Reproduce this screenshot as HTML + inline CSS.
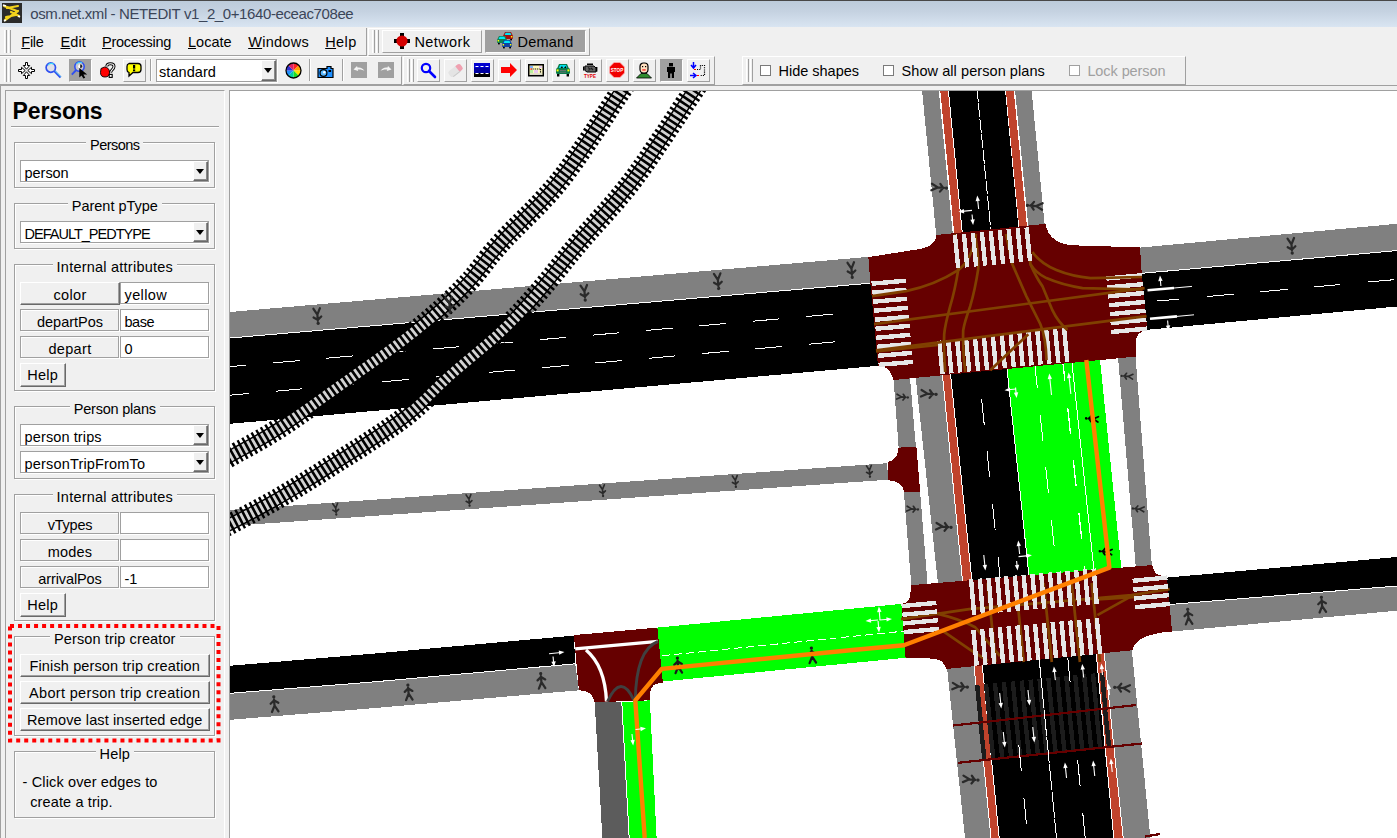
<!DOCTYPE html><html><head><meta charset="utf-8"><title>osm.net.xml - NETEDIT</title><style>
*{box-sizing:border-box}
html,body{margin:0;padding:0}
body{width:1397px;height:838px;overflow:hidden;background:#f0f0f0;font-family:"Liberation Sans",sans-serif;font-size:14px;color:#000;position:relative}
.abs{position:absolute}
.t{position:absolute;white-space:nowrap;line-height:16px;height:16px}
.titlebar{position:absolute;left:0;top:0;width:1397px;height:27px;background:linear-gradient(#bccbdb 0%,#c5d2e1 40%,#d9e5f2 100%);border-top:1px solid #484848}
.grip{position:absolute;width:7px}
.grip i{position:absolute;top:0;bottom:0;width:3px;border-left:1px solid #fff;border-right:1px solid #a0a0a0}
.raised{border:1px solid;border-color:#fff #a0a0a0 #a0a0a0 #fff}
.btn{position:absolute;background:#f0f0f0;border:1px solid;border-color:#fff #696969 #696969 #fff;box-shadow:inset -1px -1px 0 #a0a0a0}
.tb{position:absolute;width:23px;height:23px;border:1px solid;border-color:#fff #a0a0a0 #a0a0a0 #fff}
.tb.flat{border-color:transparent}
.tb.down{background:#a0a0a0;border-color:#a0a0a0 #fff #fff #a0a0a0}
.sunk{position:absolute;background:#fff;border:1px solid #a0a0a0;box-shadow:1px 1px 0 #fff}
.field{position:absolute;background:#fff;border:1px solid #a0a0a0;box-shadow:1px 1px 0 #fff}
.lbl{position:absolute;background:#f0f0f0;border:1px solid #a0a0a0;box-shadow:inset 1px 1px 0 #fff,1px 1px 0 #fff;text-align:center}
.arrow{position:absolute;background:#f0f0f0;border:1px solid;border-color:#fff #696969 #696969 #fff;box-shadow:inset -1px -1px 0 #8a8a8a}
.arrow:after{content:"";position:absolute;left:2px;top:7px;border:4.5px solid transparent;border-top:5px solid #000;border-bottom:0}
.grp{position:absolute;border:1px solid #a0a0a0;box-shadow:inset 1px 1px 0 #fff, 1px 1px 0 #fff}
.grp>span{position:absolute;top:-10px;left:50%;transform:translateX(-50%);background:#f0f0f0;padding:0 4px;white-space:nowrap;line-height:18px}
.sep{position:absolute;width:2px;border-left:1px solid #a0a0a0;border-right:1px solid #fff}
.hline{position:absolute;height:2px;border-top:1px solid #a0a0a0;border-bottom:1px solid #fff}
.cb{position:absolute;width:11px;height:11px;background:#fff;border:1px solid #7a7a7a}
u{text-decoration:underline;text-underline-offset:1px}
</style></head><body>
<div class="titlebar"></div>
<svg class="abs" style="left:2px;top:3px" width="20" height="20" viewBox="0 0 20 20"><rect width="20" height="20" fill="#2b2b2b"/><path d="M2 3 L15 8 M5 5 L16 3 M16 8 L3 17 M9 9 L17 13 M4 14 L14 12" stroke="#f2d21c" stroke-width="2.2" fill="none" stroke-linecap="round"/><path d="M1 2 l3 1 M16 13 l2 1 M2 18 l2 -1" stroke="#fff" stroke-width="1.6"/></svg>
<div class="t" style="left:30.30px;top:5.55px;font-size:15px;letter-spacing:-0.394px;color:#3b4558;">osm.net.xml - NETEDIT v1_2_0+1640-eceac708ee</div>
<div class="grip" style="left:4px;top:30px;height:23px"><i style="left:0"></i><i style="left:4px"></i></div>
<div class="t" style="left:21.30px;top:34.00px;font-size:14.5px;letter-spacing:-0.292px;height:19px;"><u>F</u>ile</div>
<div class="t" style="left:60.50px;top:34.00px;font-size:14.5px;letter-spacing:0.128px;height:19px;"><u>E</u>dit</div>
<div class="t" style="left:102.00px;top:34.00px;font-size:14.5px;letter-spacing:-0.274px;height:19px;"><u>P</u>rocessing</div>
<div class="t" style="left:188.00px;top:34.00px;font-size:14.5px;letter-spacing:0.009px;height:19px;"><u>L</u>ocate</div>
<div class="t" style="left:248.20px;top:34.00px;font-size:14.5px;letter-spacing:0.282px;height:19px;"><u>W</u>indows</div>
<div class="t" style="left:325.20px;top:34.00px;font-size:14.5px;letter-spacing:0.419px;height:19px;"><u>H</u>elp</div>
<div class="abs" style="left:0;top:55px;width:367px;height:1px;background:#a0a0a0"></div>
<div class="abs" style="left:366px;top:28px;width:1px;height:28px;background:#a0a0a0"></div>
<div class="abs" style="left:368px;top:28px;width:222px;height:28px;border:1px solid;border-color:#fff #a0a0a0 #a0a0a0 #fff"></div>
<div class="grip" style="left:372px;top:30px;height:23px"><i style="left:0"></i><i style="left:4px"></i></div>
<div class="abs raised" style="left:382px;top:30px;width:100px;height:23px"></div>
<svg class="abs" style="left:394px;top:33px" width="16" height="16" viewBox="0 0 16 16"><rect x="6" y="0" width="4" height="16" fill="#000"/><rect x="0" y="6" width="16" height="4" fill="#000"/><circle cx="8" cy="8" r="5.6" fill="#d40000"/></svg>
<div class="t" style="left:414.40px;top:34.00px;font-size:14.5px;letter-spacing:0.415px;">Network</div>
<div class="abs" style="left:485px;top:30px;width:101px;height:23px;background:#a0a0a0;border:1px solid;border-color:#a0a0a0 #fff #fff #a0a0a0"></div>
<svg class="abs" style="left:497px;top:32px" width="17" height="17" viewBox="0 0 17 17"><g transform="translate(6 0)"><path d="M2 0 H8 L9.5 3 H.5 Z" fill="#a01010"/><path d="M2.6 .8 H7.4 L8.4 3 H1.6 Z" fill="#00e8f8"/><rect x="0" y="3" width="10" height="4" rx="1" fill="#a01010"/><rect x=".6" y="4" width="1.5" height="1.5" fill="#ff0"/><rect x="7.9" y="4" width="1.5" height="1.5" fill="#ff0"/><rect x="1" y="7" width="1.8" height="1.4" fill="#000"/><rect x="7.2" y="7" width="1.8" height="1.4" fill="#000"/></g><g transform="translate(0 4)"><path d="M2 0 H8 L9.5 3 H.5 Z" fill="#108050"/><path d="M2.6 .8 H7.4 L8.4 3 H1.6 Z" fill="#00e8f8"/><rect x="0" y="3" width="10" height="4" rx="1" fill="#108050"/><rect x=".6" y="4" width="1.5" height="1.5" fill="#ff0"/><rect x="7.9" y="4" width="1.5" height="1.5" fill="#ff0"/><rect x="1" y="7" width="1.8" height="1.4" fill="#000"/><rect x="7.2" y="7" width="1.8" height="1.4" fill="#000"/></g><g transform="translate(5 8)"><path d="M2 0 H8 L9.5 3 H.5 Z" fill="#1040a0"/><path d="M2.6 .8 H7.4 L8.4 3 H1.6 Z" fill="#00e8f8"/><rect x="0" y="3" width="10" height="4" rx="1" fill="#1040a0"/><rect x=".6" y="4" width="1.5" height="1.5" fill="#ff0"/><rect x="7.9" y="4" width="1.5" height="1.5" fill="#ff0"/><rect x="1" y="7" width="1.8" height="1.4" fill="#000"/><rect x="7.2" y="7" width="1.8" height="1.4" fill="#000"/></g></svg>
<div class="t" style="left:517.50px;top:34.00px;font-size:14.5px;letter-spacing:0.215px;">Demand</div>
<div class="abs" style="left:0;top:56px;width:402px;height:29px;border-top:1px solid #fff;border-bottom:1px solid #a0a0a0;border-right:1px solid #a0a0a0"></div>
<div class="grip" style="left:4px;top:59px;height:23px"><i style="left:0"></i><i style="left:4px"></i></div>
<svg class="abs" style="left:18px;top:62px" width="17" height="17" viewBox="0 0 17 17"><g fill="#fff" stroke="#000" stroke-width="1" stroke-linejoin="miter"><g transform="rotate(0 8.5 8.5)"><path d="M7.5 .5 H9.5 V3.5 H11.7 L8.5 7.2 L5.3 3.5 H7.5 Z"/></g><g transform="rotate(90 8.5 8.5)"><path d="M7.5 .5 H9.5 V3.5 H11.7 L8.5 7.2 L5.3 3.5 H7.5 Z"/></g><g transform="rotate(180 8.5 8.5)"><path d="M7.5 .5 H9.5 V3.5 H11.7 L8.5 7.2 L5.3 3.5 H7.5 Z"/></g><g transform="rotate(270 8.5 8.5)"><path d="M7.5 .5 H9.5 V3.5 H11.7 L8.5 7.2 L5.3 3.5 H7.5 Z"/></g></g></svg>
<svg class="abs" style="left:45px;top:62px" width="17" height="17" viewBox="0 0 17 17"><circle cx="5.8" cy="5.6" r="4.7" fill="#e0e0e8" stroke="#3050f0" stroke-width="1.7"/><path d="M3 3.2 A4.7 4.7 0 0 1 8.8 2.2" stroke="#40d8f8" stroke-width="1.2" fill="none"/><path d="M9.3 9 L15.6 15.6" stroke="#3050f0" stroke-width="2.2"/><path d="M9.9 8.6 L16 14.8" stroke="#58d0f0" stroke-width="1"/></svg>
<div class="tb down" style="left:69px;top:59px;width:23px;height:23px"></div>
<svg class="abs" style="left:71px;top:60px" width="18" height="19" viewBox="0 0 18 19"><circle cx="8.5" cy="6.6" r="4.7" fill="#c8c8d0" stroke="#3050f0" stroke-width="1.6"/><path d="M5.5 4 A4.7 4.7 0 0 1 11 2.8" stroke="#40d8f8" stroke-width="1.1" fill="none"/><path d="M5.2 10 L.8 14.6" stroke="#3050f0" stroke-width="1.9"/><circle cx="9.2" cy="6.2" r="2" fill="#fff"/><path d="M9.2 4.2 a2 2 0 0 1 0 4 z" fill="#222"/><path d="M8.3 8 L8.3 17.6 L10.6 15.4 L12.4 18.6 L14.2 17.8 L12.4 14.6 L16.2 14.6 Z" fill="#000"/></svg>
<svg class="abs" style="left:100px;top:62px" width="16" height="17" viewBox="0 0 16 17"><path d="M1 6.5 L4.5 5 Q9.5 5.5 9.5 10.5 Q9.5 15 5 15 Q.5 15 .5 10.5 Z" fill="#f00" stroke="#000" stroke-width=".9"/><path d="M6.8 4.6 C6.8 .8 14 .8 14 4.6 C14 7.6 10.6 7.6 10.6 10.8" fill="none" stroke="#000" stroke-width="3"/><path d="M6.8 4.6 C6.8 .8 14 .8 14 4.6 C14 7.6 10.6 7.6 10.6 10.8" fill="none" stroke="#fff" stroke-width="1.1"/><rect x="9.2" y="12.4" width="3" height="3" fill="#fff" stroke="#000" stroke-width="1.1"/></svg>
<div class="tb" style="left:123px;top:59px;width:23px;height:23px"></div>
<svg class="abs" style="left:126px;top:62px" width="16" height="16" viewBox="0 0 16 16"><path d="M3 1.5 H12 A3 3 0 0 1 15 4.5 V7.5 A3 3 0 0 1 12 10.5 H7 L3 14 V10.5 A3 3 0 0 1 1 7.5 V4.5 A3 3 0 0 1 3 1.5 Z" fill="#ff0" stroke="#000" stroke-width="1.3"/><rect x="7" y="3" width="2.2" height="3.6" fill="#000"/><rect x="7" y="7.4" width="2.2" height="1.8" fill="#000"/></svg>
<div class="sep" style="left:150px;top:59px;height:22px"></div>
<div class="sunk" style="left:156px;top:59px;width:121px;height:23px"><div class="arrow" style="right:0px;top:0px;width:15px;height:21px"></div></div>
<div class="t" style="left:159.00px;top:63.50px;font-size:14.5px;letter-spacing:0.071px;">standard</div>
<svg class="abs" style="left:285px;top:62px" width="17" height="17" viewBox="0 0 17 17"><path d="M8.5 8.5 L8.50 1.00 A7.5 7.5 0 0 1 13.80 3.20 Z" fill="#ff2020"/><path d="M8.5 8.5 L13.80 3.20 A7.5 7.5 0 0 1 16.00 8.50 Z" fill="#ffa000"/><path d="M8.5 8.5 L16.00 8.50 A7.5 7.5 0 0 1 13.80 13.80 Z" fill="#ffe000"/><path d="M8.5 8.5 L13.80 13.80 A7.5 7.5 0 0 1 8.50 16.00 Z" fill="#20e020"/><path d="M8.5 8.5 L8.50 16.00 A7.5 7.5 0 0 1 3.20 13.80 Z" fill="#00d0a0"/><path d="M8.5 8.5 L3.20 13.80 A7.5 7.5 0 0 1 1.00 8.50 Z" fill="#2090ff"/><path d="M8.5 8.5 L1.00 8.50 A7.5 7.5 0 0 1 3.20 3.20 Z" fill="#3030d0"/><path d="M8.5 8.5 L3.20 3.20 A7.5 7.5 0 0 1 8.50 1.00 Z" fill="#e02060"/><circle cx="8.5" cy="8.5" r="7.5" fill="none" stroke="#000" stroke-width="1.3"/></svg>
<div class="sep" style="left:309px;top:59px;height:22px"></div>
<svg class="abs" style="left:317px;top:64px" width="17" height="15" viewBox="0 0 17 15"><path d="M1 4.5 H10 V2.5 H14 V4.5 H16 V13.5 H1 Z" fill="#1e90ff" stroke="#000" stroke-width="1.2"/><circle cx="6.5" cy="9" r="3.4" fill="#58b8ff" stroke="#000" stroke-width="1.2"/><circle cx="7.3" cy="8.2" r="1.2" fill="#fff"/><rect x="11.5" y="6" width="2.6" height="2" fill="#000"/></svg>
<div class="sep" style="left:342px;top:59px;height:22px"></div>
<svg class="abs" style="left:351px;top:62px" width="16" height="16" viewBox="0 0 16 16"><rect width="16" height="16" fill="#a0a0a0"/><path d="M2.5 7.5 L6 4 L6.5 5.6 C9.5 5 12 6.5 13.5 9 C11.5 7.6 9 7.2 6.8 7.6 L7.2 9 Z" fill="#f4f4f4"/></svg>
<svg class="abs" style="left:378px;top:62px" width="16" height="16" viewBox="0 0 16 16"><rect width="16" height="16" fill="#a0a0a0"/><path d="M2.5 7.5 L6 4 L6.5 5.6 C9.5 5 12 6.5 13.5 9 C11.5 7.6 9 7.2 6.8 7.6 L7.2 9 Z" fill="#f4f4f4" transform="translate(16 0) scale(-1 1)"/></svg>
<div class="abs" style="left:403px;top:56px;width:312px;height:29px;border:1px solid;border-color:#fff #a0a0a0 #a0a0a0 #fff"></div>
<div class="grip" style="left:407px;top:59px;height:23px"><i style="left:0"></i><i style="left:4px"></i></div>
<div class="tb" style="left:417px;top:59px;width:23px;height:23px"></div>
<svg class="abs" style="left:420px;top:62px" width="17" height="17" viewBox="0 0 17 17"><circle cx="6" cy="6" r="4.2" fill="none" stroke="#0000ff" stroke-width="2.2"/><path d="M9 9 L15 15" stroke="#0000ff" stroke-width="2.6" stroke-linecap="round"/></svg>
<div class="tb" style="left:444px;top:59px;width:23px;height:23px"></div>
<svg class="abs" style="left:447px;top:62px" width="17" height="17" viewBox="0 0 17 17"><g transform="rotate(-38 8.5 8.5)"><rect x="1" y="5" width="15" height="7" rx="2.2" fill="#e4e4e4"/><path d="M11 5 H13.8 A2.2 2.2 0 0 1 16 7.2 V9.8 A2.2 2.2 0 0 1 13.8 12 H11 Z" fill="#f0a0b0"/><path d="M3 12 h9" stroke="#c8c8c8" stroke-width="1"/></g></svg>
<div class="tb" style="left:471px;top:59px;width:23px;height:23px"></div>
<svg class="abs" style="left:474px;top:62px" width="16" height="16" viewBox="0 0 16 16"><rect x="0" y="1" width="16" height="5" fill="#0000d0"/><rect x="0" y="6" width="16" height="5" fill="#0000a0"/><rect x="0" y="11" width="16" height="4" fill="#000"/><path d="M1.5 4.5 h3 M6.5 4.5 h3 M11.5 4.5 h3 M1.5 11.5 h3 M6.5 11.5 h3 M11.5 11.5 h3" stroke="#fff" stroke-width="1"/></svg>
<div class="tb" style="left:498px;top:59px;width:23px;height:23px"></div>
<svg class="abs" style="left:501px;top:62px" width="16" height="16" viewBox="0 0 16 16"><path d="M0 5 H9 V1 L16 8 L9 15 V11 H0 Z" fill="#f00"/></svg>
<div class="tb" style="left:525px;top:59px;width:23px;height:23px"></div>
<svg class="abs" style="left:528px;top:62px" width="16" height="16" viewBox="0 0 16 16"><rect x=".75" y="2.75" width="14.5" height="11" fill="#fffac0" stroke="#000" stroke-width="1.5"/><rect x="2" y="4" width="3" height="2" fill="#7fb0ff"/><rect x="2" y="8" width="3" height="3" fill="#b8f0a0"/><rect x="6" y="8" width="4" height="3" fill="#e8c8f0"/><rect x="11" y="4" width="3" height="2" fill="#e8c8f0"/><rect x="2" y="11.5" width="12" height="1.2" fill="#c8c8c8"/><path d="M3.5 7 h9" stroke="#000" stroke-width="1.2" stroke-dasharray="1 .8"/><rect x="2.4" y="6.4" width="1.3" height="1.3" fill="#f00"/><path d="M12.5 7 v4" stroke="#000" stroke-width="1.2" stroke-dasharray="1 .8"/></svg>
<div class="tb" style="left:552px;top:59px;width:23px;height:23px"></div>
<svg class="abs" style="left:555px;top:62px" width="16" height="16" viewBox="0 0 16 16"><path d="M4 2 H12 L14 6.5 H2 Z" fill="#0a7a4a"/><path d="M5 3 H11 L12.2 6 H3.8 Z" fill="#00e0f0"/><path d="M5.5 6 l1.5 -2 l1 2 z M9 6 l1.5 -2 l1 2 z" fill="#000"/><rect x="1" y="6" width="14" height="6" rx="1.5" fill="#0a7a4a"/><rect x="2" y="12" width="2.4" height="2.5" fill="#000"/><rect x="11.6" y="12" width="2.4" height="2.5" fill="#000"/><rect x="1.6" y="7.4" width="2" height="2" fill="#ff0"/><rect x="12.4" y="7.4" width="2" height="2" fill="#ff0"/><path d="M5 8.5 h6 M5 10.2 h6" stroke="#707070" stroke-width=".9"/></svg>
<div class="tb" style="left:579px;top:59px;width:23px;height:23px"></div>
<svg class="abs" style="left:582px;top:62px" width="16" height="16" viewBox="0 0 16 16"><path d="M5 1.5 h6 v1.6 h-6 z" fill="#000"/><path d="M3 4 H12 L14 6 V10 H5 L3 8.5 Z" fill="#606060" stroke="#000" stroke-width="1"/><rect x="1" y="4.5" width="1.6" height="4" fill="#000"/><rect x="14" y="5" width="1.4" height="4.6" fill="#000"/><path d="M6 5.5 l2 1.5 l-1.5 1.5 M9 6 l2 2" stroke="#202020" stroke-width="1.2" fill="none"/><text x="8" y="15.6" font-family="Liberation Sans,sans-serif" font-weight="700" font-size="5.2" text-anchor="middle" fill="#e00000" textLength="12" lengthAdjust="spacingAndGlyphs">TYPE</text></svg>
<div class="tb" style="left:606px;top:59px;width:23px;height:23px"></div>
<svg class="abs" style="left:609px;top:62px" width="16" height="16" viewBox="0 0 16 16"><path d="M5 .5 H11 L15.5 5 V11 L11 15.5 H5 L.5 11 V5 Z" fill="#f00000" stroke="#ffb0b0" stroke-width=".8"/><text x="8" y="10.3" font-family="Liberation Sans,sans-serif" font-weight="700" font-size="6" text-anchor="middle" fill="#fff" textLength="12.5" lengthAdjust="spacingAndGlyphs">STOP</text></svg>
<div class="tb" style="left:633px;top:59px;width:23px;height:23px"></div>
<svg class="abs" style="left:636px;top:62px" width="16" height="17" viewBox="0 0 16 17"><path d="M.5 16 L5 11.5 H11 L15.5 16 Z" fill="#2e8b2e" stroke="#000" stroke-width=".8"/><rect x="4" y="1" width="8" height="10" rx="3.5" fill="#ffe0c0" stroke="#000" stroke-width="1.2"/><rect x="6" y="4" width="1.2" height="1.2" fill="#000"/><rect x="9" y="4" width="1.2" height="1.2" fill="#000"/><rect x="6.3" y="7.4" width="3.4" height="1.1" fill="#f00"/></svg>
<div class="tb down" style="left:660px;top:59px;width:23px;height:23px"></div>
<svg class="abs" style="left:663px;top:62px" width="16" height="17" viewBox="0 0 16 17"><rect x="6" y="1" width="4" height="3.4" fill="#000"/><path d="M4 5 H12 V10 H11 V16 H8.8 V11.5 H7.2 V16 H5 V10 H4 Z" fill="#000"/></svg>
<div class="tb" style="left:687px;top:59px;width:23px;height:23px"></div>
<svg class="abs" style="left:690px;top:62px" width="16" height="17" viewBox="0 0 16 17"><path d="M3.5 0 V5 M1 3 L3.5 6 L6 3" stroke="#00f" stroke-width="1.5" fill="none"/><path d="M0 13.5 H5 M3 11 L6 13.5 L3 16" stroke="#00f" stroke-width="1.5" fill="none"/><path d="M4 7.5 h2" stroke="#f00" stroke-width="1.2"/><path d="M7 13.5 h2" stroke="#f00" stroke-width="1.2"/><path d="M7 7.5 H10.5 V3.5 H14.5 V13.5 H10" stroke="#000" stroke-width="1.2" fill="none" stroke-dasharray="1.1 1.1"/></svg>
<div class="abs" style="left:742px;top:56px;width:444px;height:29px;border:1px solid;border-color:#fff #a0a0a0 #a0a0a0 #fff"></div>
<div class="grip" style="left:746px;top:59px;height:23px"><i style="left:0"></i><i style="left:4px"></i></div>
<div class="cb" style="left:760px;top:65px"></div>
<div class="t" style="left:778.50px;top:63.00px;font-size:14.5px;letter-spacing:-0.010px;">Hide shapes</div>
<div class="cb" style="left:883px;top:65px"></div>
<div class="t" style="left:901.50px;top:63.00px;font-size:14.5px;letter-spacing:0.073px;">Show all person plans</div>
<div class="cb" style="left:1069px;top:65px;border-color:#a0a0a0"></div>
<div class="t" style="left:1087.40px;top:63.00px;font-size:14.5px;letter-spacing:-0.082px;color:#a0a0a0;">Lock person</div>
<div class="abs" style="left:0;top:85px;width:1397px;height:1px;background:#a0a0a0"></div>
<div class="abs" style="left:0;top:86px;width:1px;height:752px;background:#a0a0a0"></div>
<div class="abs" style="left:5px;top:90px;width:220px;height:760px;border:1px solid;border-color:#a0a0a0 #fff #fff #a0a0a0"></div>
<div class="t" style="left:12.5px;top:99px;font-weight:bold;font-size:23px;line-height:24px;height:24px;letter-spacing:-0.1px">Persons</div>
<div class="hline" style="left:11px;top:126px;width:208px"></div>
<div class="grp" style="left:14px;top:142px;width:201px;height:46px"></div><div class="abs" style="left:86.1px;top:140px;width:57.4px;height:5px;background:#f0f0f0"></div><div class="t" style="left:90.10px;top:136.60px;font-size:14.5px;letter-spacing:-0.542px;">Persons</div>
<div class="sunk" style="left:20px;top:160px;width:189px;height:22px"><div class="arrow" style="right:0px;top:0px;width:15px;height:20px"></div></div><div class="t" style="left:24.60px;top:164.70px;font-size:14.5px;letter-spacing:-0.057px;">person</div>
<div class="grp" style="left:14px;top:203px;width:201px;height:46px"></div><div class="abs" style="left:67.8px;top:201px;width:94.0px;height:5px;background:#f0f0f0"></div><div class="t" style="left:71.80px;top:197.60px;font-size:14.5px;letter-spacing:-0.021px;">Parent pType</div>
<div class="sunk" style="left:20px;top:221px;width:189px;height:22px"><div class="arrow" style="right:0px;top:0px;width:15px;height:20px"></div></div><div class="t" style="left:24.60px;top:225.70px;font-size:14.5px;letter-spacing:-0.997px;">DEFAULT_PEDTYPE</div>
<div class="grp" style="left:14px;top:264px;width:201px;height:127px"></div><div class="abs" style="left:52.6px;top:262px;width:124.4px;height:5px;background:#f0f0f0"></div><div class="t" style="left:56.60px;top:258.60px;font-size:14.5px;letter-spacing:0.230px;">Internal attributes</div>
<div class="btn" style="left:20px;top:282px;width:100px;height:23px"></div><div class="field" style="left:120px;top:282px;width:89px;height:22px"></div><div class="t" style="left:53.40px;top:286.70px;font-size:14.5px;letter-spacing:0.351px;">color</div><div class="t" style="left:124.50px;top:286.70px;font-size:14.5px;letter-spacing:0.401px;">yellow</div>
<div class="lbl" style="left:20px;top:309px;width:99px;height:22px"></div><div class="field" style="left:120px;top:309px;width:89px;height:22px"></div><div class="t" style="left:37.00px;top:313.70px;font-size:14.5px;letter-spacing:-0.012px;">departPos</div><div class="t" style="left:124.50px;top:313.70px;font-size:14.5px;letter-spacing:-0.461px;">base</div>
<div class="lbl" style="left:20px;top:336px;width:99px;height:22px"></div><div class="field" style="left:120px;top:336px;width:89px;height:22px"></div><div class="t" style="left:48.40px;top:340.70px;font-size:14.5px;letter-spacing:0.346px;">depart</div><div class="t" style="left:124.50px;top:340.70px;font-size:14.5px;letter-spacing:0.000px;">0</div>
<div class="btn" style="left:20px;top:363px;width:46px;height:24px"></div><div class="t" style="left:27.20px;top:367.00px;font-size:14.5px;letter-spacing:0.294px;">Help</div>
<div class="grp" style="left:14px;top:406px;width:201px;height:73px"></div><div class="abs" style="left:69.8px;top:404px;width:90.1px;height:5px;background:#f0f0f0"></div><div class="t" style="left:73.75px;top:400.60px;font-size:14.5px;letter-spacing:-0.211px;">Person plans</div>
<div class="sunk" style="left:20px;top:424px;width:189px;height:22px"><div class="arrow" style="right:0px;top:0px;width:15px;height:20px"></div></div><div class="t" style="left:24.60px;top:428.70px;font-size:14.5px;letter-spacing:0.111px;">person trips</div>
<div class="sunk" style="left:20px;top:451px;width:189px;height:22px"><div class="arrow" style="right:0px;top:0px;width:15px;height:20px"></div></div><div class="t" style="left:24.60px;top:455.70px;font-size:14.5px;letter-spacing:0.167px;">personTripFromTo</div>
<div class="grp" style="left:14px;top:494px;width:201px;height:127px"></div><div class="abs" style="left:52.6px;top:492px;width:124.4px;height:5px;background:#f0f0f0"></div><div class="t" style="left:56.60px;top:488.60px;font-size:14.5px;letter-spacing:0.230px;">Internal attributes</div>
<div class="lbl" style="left:20px;top:512px;width:99px;height:22px"></div><div class="field" style="left:120px;top:512px;width:89px;height:22px"></div><div class="t" style="left:47.80px;top:516.70px;font-size:14.5px;letter-spacing:-0.257px;">vTypes</div>
<div class="lbl" style="left:20px;top:539px;width:99px;height:22px"></div><div class="field" style="left:120px;top:539px;width:89px;height:22px"></div><div class="t" style="left:47.80px;top:543.70px;font-size:14.5px;letter-spacing:0.174px;">modes</div>
<div class="lbl" style="left:20px;top:566px;width:99px;height:22px"></div><div class="field" style="left:120px;top:566px;width:89px;height:22px"></div><div class="t" style="left:38.35px;top:570.70px;font-size:14.5px;letter-spacing:-0.117px;">arrivalPos</div><div class="t" style="left:124.50px;top:570.70px;font-size:14.5px;letter-spacing:-0.149px;">-1</div>
<div class="btn" style="left:20px;top:593px;width:46px;height:24px"></div><div class="t" style="left:27.20px;top:597.00px;font-size:14.5px;letter-spacing:0.294px;">Help</div>
<svg class="abs" style="left:0;top:0" width="230" height="838"><rect x="10" y="626" width="208.5" height="114.5" fill="none" stroke="#f00" stroke-width="4" stroke-dasharray="4 4.02"/></svg>
<div class="grp" style="left:14px;top:636px;width:201px;height:100px"></div><div class="abs" style="left:50.0px;top:634px;width:129.5px;height:5px;background:#f0f0f0"></div><div class="t" style="left:54.05px;top:630.60px;font-size:14.5px;letter-spacing:0.117px;">Person trip creator</div>
<div class="btn" style="left:20px;top:654px;width:190px;height:23px"></div><div class="t" style="left:29.50px;top:658.00px;font-size:14.5px;letter-spacing:0.132px;">Finish person trip creation</div>
<div class="btn" style="left:20px;top:681px;width:190px;height:23px"></div><div class="t" style="left:29.10px;top:685.00px;font-size:14.5px;letter-spacing:0.322px;">Abort person trip creation</div>
<div class="btn" style="left:20px;top:708px;width:190px;height:23px"></div><div class="t" style="left:27.00px;top:712.00px;font-size:14.5px;letter-spacing:0.116px;">Remove last inserted edge</div>
<div class="grp" style="left:14px;top:751px;width:201px;height:67px"></div><div class="abs" style="left:95.5px;top:749px;width:38.6px;height:5px;background:#f0f0f0"></div><div class="t" style="left:99.50px;top:745.60px;font-size:14.5px;letter-spacing:0.194px;">Help</div>
<div class="t" style="left:22.60px;top:773.50px;font-size:14.5px;letter-spacing:0.130px;">- Click over edges to</div>
<div class="t" style="left:30.20px;top:793.50px;font-size:14.5px;letter-spacing:0.128px;">create a trip.</div>
<div class="abs" style="left:229px;top:90px;width:1168px;height:748px;background:#fff;border-left:1px solid #a0a0a0;border-top:1px solid #a0a0a0;overflow:hidden">
<svg width="1167" height="747" viewBox="230 91 1167 747" style="position:absolute;left:0;top:0;display:block" shape-rendering="crispEdges"><polygon points="230.0,312.0 868.4,256.9 870.4,283.2 230.0,338.0" fill="#808080"/><polygon points="230.0,338.0 870.4,283.2 878.0,365.8 230.0,423.8" fill="#000"/><polyline points="230.0,338.0 870.4,283.2" fill="none" stroke="#fff" stroke-width="1"/><polyline points="230.0,366.6 246.3,365.2" fill="none" stroke="#fff" stroke-width="1"/><polyline points="273.1,362.9 299.6,360.6" fill="none" stroke="#fff" stroke-width="1"/><polyline points="326.4,358.2 352.9,355.9" fill="none" stroke="#fff" stroke-width="1"/><polyline points="379.7,353.6 406.2,351.3" fill="none" stroke="#fff" stroke-width="1"/><polyline points="433.0,349.0 459.5,346.7" fill="none" stroke="#fff" stroke-width="1"/><polyline points="486.3,344.3 512.8,342.0" fill="none" stroke="#fff" stroke-width="1"/><polyline points="539.6,339.7 566.1,337.4" fill="none" stroke="#fff" stroke-width="1"/><polyline points="592.9,335.1 619.4,332.8" fill="none" stroke="#fff" stroke-width="1"/><polyline points="646.2,330.4 672.7,328.1" fill="none" stroke="#fff" stroke-width="1"/><polyline points="699.5,325.8 726.0,323.5" fill="none" stroke="#fff" stroke-width="1"/><polyline points="752.8,321.2 779.3,318.9" fill="none" stroke="#fff" stroke-width="1"/><polyline points="806.1,316.5 832.6,314.2" fill="none" stroke="#fff" stroke-width="1"/><polyline points="230.0,395.2 248.8,393.5" fill="none" stroke="#fff" stroke-width="1"/><polyline points="275.6,391.2 302.1,388.8" fill="none" stroke="#fff" stroke-width="1"/><polyline points="328.9,386.5 355.4,384.1" fill="none" stroke="#fff" stroke-width="1"/><polyline points="382.2,381.8 408.7,379.4" fill="none" stroke="#fff" stroke-width="1"/><polyline points="435.5,377.1 462.0,374.7" fill="none" stroke="#fff" stroke-width="1"/><polyline points="488.8,372.4 515.3,370.0" fill="none" stroke="#fff" stroke-width="1"/><polyline points="542.1,367.7 568.6,365.3" fill="none" stroke="#fff" stroke-width="1"/><polyline points="595.4,363.0 621.9,360.6" fill="none" stroke="#fff" stroke-width="1"/><polyline points="648.7,358.3 675.2,355.9" fill="none" stroke="#fff" stroke-width="1"/><polyline points="702.0,353.6 728.5,351.2" fill="none" stroke="#fff" stroke-width="1"/><polyline points="755.3,348.9 781.8,346.5" fill="none" stroke="#fff" stroke-width="1"/><polyline points="808.6,344.2 835.1,341.8" fill="none" stroke="#fff" stroke-width="1"/><polygon points="230.0,510.0 887.0,463.2 888.3,479.7 230.0,526.0" fill="#808080"/><polygon points="230.0,665.8 368.0,654.1 573.9,635.6 575.2,663.8 368.0,682.4 230.0,693.3" fill="#000"/><polygon points="230.0,693.3 368.0,682.4 575.2,663.8 578.9,690.3 368.0,708.6 230.0,719.8" fill="#808080"/><polyline points="230.0,693.3 368.0,682.4 575.2,663.8" fill="none" stroke="#fff" stroke-width="1"/><polygon points="657.4,627.6 901.4,603.9 905.6,657.8 662.4,681.5" fill="#00ff00"/><polyline points="662.4,655.7 903.5,631.2" fill="none" stroke="#fff" stroke-width="1" stroke-dasharray="8 4" stroke-dashoffset="0"/><polygon points="594.7,702.3 621.6,702.3 629.0,838.0 602.4,838.0" fill="#5c5c5c"/><polygon points="621.6,702.3 649.9,700.3 656.6,838.0 629.0,838.0" fill="#00ff00"/><polyline points="621.8,702.3 629.2,838.0" fill="none" stroke="#fff" stroke-width="1"/><polygon points="1139.7,247.6 1397.0,223.8 1397.0,250.6 1141.7,273.3" fill="#808080"/><polygon points="1141.7,273.3 1397.0,250.6 1397.0,306.5 1147.3,329.8" fill="#000"/><polyline points="1141.7,273.3 1397.0,250.6" fill="none" stroke="#fff" stroke-width="1"/><polyline points="1157.3,301.0 1179.3,299.1" fill="none" stroke="#fff" stroke-width="1"/><polyline points="1207.4,296.5 1233.7,294.1" fill="none" stroke="#fff" stroke-width="1"/><polyline points="1260.0,291.8 1287.6,289.3" fill="none" stroke="#fff" stroke-width="1"/><polyline points="1313.9,286.9 1340.2,284.5" fill="none" stroke="#fff" stroke-width="1"/><polyline points="1367.8,282.0 1394.1,279.7" fill="none" stroke="#fff" stroke-width="1"/><polygon points="1167.0,577.6 1397.0,557.0 1397.0,586.0 1169.5,604.5" fill="#000"/><polygon points="1169.5,604.5 1397.0,586.0 1397.0,610.7 1172.0,631.5" fill="#808080"/><polyline points="1169.5,604.5 1397.0,586.0" fill="none" stroke="#fff" stroke-width="1"/><polygon points="921.8,88.0 938.5,88.0 953.9,245.0 937.2,245.0" fill="#808080"/><polygon points="938.5,88.0 940.0,88.0 955.4,245.0 953.9,245.0" fill="#fff"/><polygon points="940.0,88.0 947.6,88.0 963.0,245.0 955.4,245.0" fill="#c0432c"/><polygon points="947.6,88.0 948.6,88.0 964.0,245.0 963.0,245.0" fill="#fff"/><polygon points="948.6,88.0 1004.8,88.0 1020.2,245.0 964.0,245.0" fill="#000"/><polygon points="1004.8,88.0 1005.6,88.0 1021.0,245.0 1020.2,245.0" fill="#fff"/><polygon points="1005.6,88.0 1013.4,88.0 1028.8,245.0 1021.0,245.0" fill="#c0432c"/><polygon points="1013.4,88.0 1014.8,88.0 1030.2,245.0 1028.8,245.0" fill="#fff"/><polygon points="1014.8,88.0 1031.3,88.0 1046.7,245.0 1030.2,245.0" fill="#808080"/><polyline points="976.9,88.0 992.3,245.0" fill="none" stroke="#fff" stroke-width="1" stroke-dasharray="14 1.5" stroke-dashoffset="0"/><polygon points="912.7,350.0 940.0,350.0 963.6,592.0 938.9,592.0" fill="#808080"/><polygon points="940.0,350.0 948.0,350.0 973.1,592.0 963.6,592.0" fill="#c0432c"/><polygon points="948.0,350.0 1005.0,350.0 1030.7,592.0 973.1,592.0" fill="#000"/><polygon points="1005.0,350.0 1099.0,350.0 1123.8,592.0 1030.7,592.0" fill="#00ff00"/><polyline points="940.0,350.0 963.6,592.0" fill="none" stroke="#fff" stroke-width="1"/><polyline points="948.0,350.0 973.1,592.0" fill="none" stroke="#fff" stroke-width="1"/><polyline points="1005.0,350.0 1030.7,592.0" fill="none" stroke="#fff" stroke-width="1"/><polyline points="976.5,350.0 1001.6,592.0" fill="none" stroke="#fff" stroke-width="1" stroke-dasharray="26 27" stroke-dashoffset="4"/><polyline points="1033.3,350.0 1059.0,592.0" fill="none" stroke="#fff" stroke-width="1" stroke-dasharray="26 27" stroke-dashoffset="-12"/><polyline points="1061.6,350.0 1087.3,592.0" fill="none" stroke="#fff" stroke-width="1.3" stroke-dasharray="26 27" stroke-dashoffset="-5"/><polyline points="1070.6,350.0 1096.3,592.0" fill="none" stroke="#fff" stroke-width="1"/><polygon points="1117.4,350.0 1135.0,350.0 1153.9,592.0 1137.9,592.0" fill="#808080"/><polygon points="891.5,352.0 907.8,352.0 916.6,455.0 899.2,455.0" fill="#808080"/><polygon points="903.2,484.0 919.5,484.0 928.5,596.0 912.2,596.0" fill="#808080"/><path d="M887.6 461.8 Q897.6 460.5 898.4 447.7 L916.4 446.5 L920.2 491.6 L903.9 491.6 Q902.5 481.5 888.3 480.3 Z" fill="#660000" stroke="none" stroke-width="1"/><polygon points="944.1,640.0 971.5,640.0 991.0,838.0 965.0,838.0" fill="#808080"/><polygon points="971.5,640.0 979.8,640.0 999.2,838.0 991.0,838.0" fill="#c0432c"/><polygon points="979.8,640.0 1094.9,640.0 1113.8,838.0 999.2,838.0" fill="#000"/><polygon points="1094.9,640.0 1102.9,640.0 1123.2,838.0 1113.8,838.0" fill="#c0432c"/><polygon points="1102.9,640.0 1130.8,640.0 1150.4,838.0 1123.2,838.0" fill="#808080"/><polyline points="971.5,640.0 991.0,838.0" fill="none" stroke="#fff" stroke-width="1"/><polyline points="979.8,640.0 999.2,838.0" fill="none" stroke="#fff" stroke-width="1"/><polyline points="1094.9,640.0 1113.8,838.0" fill="none" stroke="#fff" stroke-width="1"/><polyline points="1102.9,640.0 1123.2,838.0" fill="none" stroke="#fff" stroke-width="1"/><path d="M868.4 257.1 L920.5 248.9 Q935 246 936.5 235 L1045.4 223.8 Q1049 243.5 1072.9 245.3 L1140 247.4 L1141.7 272.7 L1147.3 329.8 Q1136.2 331.5 1135.6 343 L1135.6 356.6 L893.5 380 Q890 368.5 885 367.6 L878 366.2 L870.4 283.2 Z" fill="#660000" stroke="none" stroke-width="1"/><path d="M911.4 585.1 L1152 565.1 L1155.8 573.8 L1167 577.6 L1172 631.5 Q1136 634 1132.3 650.3 L946.5 669 Q944 659.5 932.7 658.6 L905.6 657.8 L901.4 603.9 Q909.5 602.5 909.9 596 Z" fill="#660000" stroke="none" stroke-width="1"/><path d="M573.9 635.1 L657.4 627.6 L662.9 682.7 Q651 683.5 650.4 691 L649.9 700.3 L594 702.3 Q593.5 691 578.9 690.3 Z" fill="#660000" stroke="none" stroke-width="1"/><path d="M575.2 648.9 L657.9 641.4" fill="none" stroke="#fff" stroke-width="3.3" shape-rendering="auto"/><path d="M586 650 Q605 666 606.5 701.5" fill="none" stroke="#fff" stroke-width="3.3" shape-rendering="auto"/><path d="M657.9 641.4 Q636 650 635.3 700.3" fill="none" stroke="#404040" stroke-width="2.9" shape-rendering="auto"/><path d="M607.5 701.5 Q621 672 634 700.3" fill="none" stroke="#404040" stroke-width="2.9" shape-rendering="auto"/><polyline points="888.5,280.0 895.9,365.6" fill="none" stroke="#e6e6e6" stroke-width="34.3" stroke-dasharray="4.4 4.656" stroke-dashoffset="0"/><polyline points="1124.1,274.7 1129.5,332.5" fill="none" stroke="#e6e6e6" stroke-width="36" stroke-dasharray="4.4 4.539" stroke-dashoffset="0"/><polyline points="938.7,357.6 1067.9,344.9" fill="none" stroke="#e6e6e6" stroke-width="33.8" stroke-dasharray="4.4 4.557" stroke-dashoffset="0"/><path d="M872 296.1 L906.1 291.1 Q935 285 958.2 270.1 Q972 260 976 234" fill="none" stroke="#804000" stroke-width="2.7" shape-rendering="auto"/><path d="M874 324.2 L1144.6 288.1" fill="none" stroke="#804000" stroke-width="2.7" shape-rendering="auto"/><path d="M876 350.3 L1146.6 316.2" fill="none" stroke="#804000" stroke-width="2.7" shape-rendering="auto"/><path d="M955 234 Q958.5 255 958.2 270.1 Q955 290 950.2 306.2 Q945 325 944.2 334.2 Q943.5 352 945.2 372" fill="none" stroke="#804000" stroke-width="2.7" shape-rendering="auto"/><path d="M975 234 Q978.6 255 978.2 269.1 Q975 290 970.2 306.2 Q964.5 322 963.2 330.2 Q962.5 350 965.2 372" fill="none" stroke="#804000" stroke-width="2.7" shape-rendering="auto"/><path d="M1006 234 L1012.3 264.1 L1026.3 296.1 L1040.4 324.2 Q1046 338 1046.5 360" fill="none" stroke="#804000" stroke-width="2.7" shape-rendering="auto"/><path d="M1028 238 L1030.4 264.1 Q1036 277 1042.4 286.1 L1052.4 310.2 Q1058 322 1067.4 330" fill="none" stroke="#804000" stroke-width="2.7" shape-rendering="auto"/><path d="M1032.4 252 Q1040 263 1056.4 270.1 Q1072 276.5 1090.5 278.1 L1142 277" fill="none" stroke="#804000" stroke-width="2.7" shape-rendering="auto"/><path d="M1030.4 264.1 Q1036 273 1046.4 278.1 Q1062 285 1082.5 288.1 L1142 289.5" fill="none" stroke="#804000" stroke-width="2.7" shape-rendering="auto"/><path d="M990.3 370.3 L1028.3 334.2" fill="none" stroke="#804000" stroke-width="2.7" shape-rendering="auto"/><path d="M938 345 Q900 349 876 351.5" fill="none" stroke="#804000" stroke-width="2.7" shape-rendering="auto"/><path d="M901 619.1 L969.2 609.1 L1097.5 598.1 L1131.5 595.1 L1169.6 589.1" fill="none" stroke="#804000" stroke-width="2.7" shape-rendering="auto"/><path d="M903 613 L935.1 613.1 Q960 619 975.2 627.2 L1000 656" fill="none" stroke="#804000" stroke-width="2.7" shape-rendering="auto"/><path d="M943.1 631.2 L969.2 649.2 L988 661" fill="none" stroke="#804000" stroke-width="2.7" shape-rendering="auto"/><path d="M1097.4 615.1 L1131.5 596.1" fill="none" stroke="#804000" stroke-width="2.7" shape-rendering="auto"/><path d="M1097.5 599.5 L1168 595" fill="none" stroke="#804000" stroke-width="2.7" shape-rendering="auto"/><path d="M987.5 583 L995.7 662" fill="none" stroke="#804000" stroke-width="2.7" shape-rendering="auto"/><path d="M1015.6 583 L1023.8 662" fill="none" stroke="#804000" stroke-width="2.7" shape-rendering="auto"/><path d="M1043.6 583 L1051.8 662" fill="none" stroke="#804000" stroke-width="2.7" shape-rendering="auto"/><path d="M1071.7 583 L1079.9 662" fill="none" stroke="#804000" stroke-width="2.7" shape-rendering="auto"/><path d="M1091.7 583 L1099.9 662" fill="none" stroke="#804000" stroke-width="2.7" shape-rendering="auto"/><polyline points="954.4,251.7 1030.5,244.0" fill="none" stroke="#e6e6e6" stroke-width="33.8" stroke-dasharray="4.4 4.609" stroke-dashoffset="0"/><polyline points="970.4,597.2 1097.4,586.1" fill="none" stroke="#e6e6e6" stroke-width="35.5" stroke-dasharray="4.4 4.390" stroke-dashoffset="0"/><polyline points="972.8,647.8 1100.6,635.7" fill="none" stroke="#e6e6e6" stroke-width="36" stroke-dasharray="4.4 4.454" stroke-dashoffset="0"/><polyline points="918.8,602.3 921.6,632.7" fill="none" stroke="#e6e6e6" stroke-width="35" stroke-dasharray="4.4 4.304" stroke-dashoffset="0"/><polyline points="1149.8,577.0 1152.7,607.8" fill="none" stroke="#e6e6e6" stroke-width="35" stroke-dasharray="4.4 4.439" stroke-dashoffset="0"/><polyline points="976.8,703.9 1106.3,691.2" fill="none" stroke="#1c1c1c" stroke-width="37.8" stroke-dasharray="4.4 4.55" stroke-dashoffset="0"/><polyline points="980.3,741.8 1111.6,727.9" fill="none" stroke="#1c1c1c" stroke-width="38" stroke-dasharray="4.4 4.55" stroke-dashoffset="0"/><polyline points="953.2,725.5 1136.2,705.0" fill="none" stroke="#660000" stroke-width="2.2"/><polyline points="957.9,762.8 1142.1,743.5" fill="none" stroke="#660000" stroke-width="2.2"/><polyline points="1145.0,836.5 1160.0,834.0" fill="none" stroke="#660000" stroke-width="2.2"/><polyline points="1038.8,655.0 1056.5,838.0" fill="none" stroke="#fff" stroke-width="1" stroke-dasharray="26 1.5" stroke-dashoffset="0"/><polyline points="1018.8,745.0 1027.8,838.0" fill="none" stroke="#fff" stroke-width="1" stroke-dasharray="26 27" stroke-dashoffset="0"/><polyline points="1077.6,760.0 1085.2,838.0" fill="none" stroke="#fff" stroke-width="1" stroke-dasharray="26 27" stroke-dashoffset="0"/><polyline points="1039.1,658.0 1041.4,682.0" fill="none" stroke="#fff" stroke-width="1"/><polyline points="1067.8,658.0 1070.1,682.0" fill="none" stroke="#fff" stroke-width="1"/><g shape-rendering="auto"><polyline points="627.0,82.0 626.9,82.2 627.1,81.9 627.4,81.5 627.7,81.1 627.8,80.9 627.6,81.2 627.0,82.1 625.8,83.9 623.8,86.8 621.0,91.0 617.1,96.8 612.3,104.1 606.8,112.6 600.6,122.1 594.0,132.1 587.1,142.5 580.1,152.7 573.2,162.6 566.6,171.8 560.3,180.0 554.2,187.4 548.0,194.5 541.7,201.3 535.5,207.8 529.2,214.1 523.1,220.1 517.2,226.0 511.5,231.7 506.1,237.2 501.0,242.7 496.4,248.0 492.2,252.9 488.4,257.6 484.9,262.2 481.5,266.6 478.1,270.9 474.7,275.2 471.1,279.5 467.2,283.8 463.0,288.3 458.5,292.8 454.0,297.2 449.4,301.6 444.7,305.9 439.9,310.3 434.8,314.7 429.6,319.2 424.0,323.8 418.2,328.6 412.0,333.5 405.3,338.7 398.1,344.1 390.4,349.8 382.5,355.5 374.3,361.3 366.2,367.1 358.1,372.8 350.3,378.4 342.8,383.6 335.8,388.6 329.2,393.3 322.9,397.8 316.8,402.2 310.9,406.5 305.1,410.5 299.5,414.5 294.0,418.3 288.6,422.0 283.3,425.6 278.0,429.0 272.7,432.3 267.3,435.6 262.0,438.7 256.7,441.7 251.6,444.6 246.7,447.3 242.1,449.8 237.8,452.1 233.9,454.3 230.5,456.2 227.6,457.9 225.1,459.3 223.0,460.5 221.3,461.5 219.8,462.3 218.5,463.0 217.5,463.6 216.6,464.1 215.8,464.6 215.0,465.0" fill="none" stroke="#000" stroke-width="21" stroke-dasharray="2.4 3.0" stroke-dashoffset="0"/><polyline points="627.0,82.0 626.9,82.2 627.1,81.9 627.4,81.5 627.7,81.1 627.8,80.9 627.6,81.2 627.0,82.1 625.8,83.9 623.8,86.8 621.0,91.0 617.1,96.8 612.3,104.1 606.8,112.6 600.6,122.1 594.0,132.1 587.1,142.5 580.1,152.7 573.2,162.6 566.6,171.8 560.3,180.0 554.2,187.4 548.0,194.5 541.7,201.3 535.5,207.8 529.2,214.1 523.1,220.1 517.2,226.0 511.5,231.7 506.1,237.2 501.0,242.7 496.4,248.0 492.2,252.9 488.4,257.6 484.9,262.2 481.5,266.6 478.1,270.9 474.7,275.2 471.1,279.5 467.2,283.8 463.0,288.3 458.5,292.8 454.0,297.2 449.4,301.6 444.7,305.9 439.9,310.3 434.8,314.7 429.6,319.2 424.0,323.8 418.2,328.6 412.0,333.5 405.3,338.7 398.1,344.1 390.4,349.8 382.5,355.5 374.3,361.3 366.2,367.1 358.1,372.8 350.3,378.4 342.8,383.6 335.8,388.6 329.2,393.3 322.9,397.8 316.8,402.2 310.9,406.5 305.1,410.5 299.5,414.5 294.0,418.3 288.6,422.0 283.3,425.6 278.0,429.0 272.7,432.3 267.3,435.6 262.0,438.7 256.7,441.7 251.6,444.6 246.7,447.3 242.1,449.8 237.8,452.1 233.9,454.3 230.5,456.2 227.6,457.9 225.1,459.3 223.0,460.5 221.3,461.5 219.8,462.3 218.5,463.0 217.5,463.6 216.6,464.1 215.8,464.6 215.0,465.0" fill="none" stroke="#000" stroke-width="13"/><polyline points="627.0,82.0 626.9,82.2 627.1,81.9 627.4,81.5 627.7,81.1 627.8,80.9 627.6,81.2 627.0,82.1 625.8,83.9 623.8,86.8 621.0,91.0 617.1,96.8 612.3,104.1 606.8,112.6 600.6,122.1 594.0,132.1 587.1,142.5 580.1,152.7 573.2,162.6 566.6,171.8 560.3,180.0 554.2,187.4 548.0,194.5 541.7,201.3 535.5,207.8 529.2,214.1 523.1,220.1 517.2,226.0 511.5,231.7 506.1,237.2 501.0,242.7 496.4,248.0 492.2,252.9 488.4,257.6 484.9,262.2 481.5,266.6 478.1,270.9 474.7,275.2 471.1,279.5 467.2,283.8 463.0,288.3 458.5,292.8 454.0,297.2 449.4,301.6 444.7,305.9 439.9,310.3 434.8,314.7 429.6,319.2 424.0,323.8 418.2,328.6 412.0,333.5 405.3,338.7 398.1,344.1 390.4,349.8 382.5,355.5 374.3,361.3 366.2,367.1 358.1,372.8 350.3,378.4 342.8,383.6 335.8,388.6 329.2,393.3 322.9,397.8 316.8,402.2 310.9,406.5 305.1,410.5 299.5,414.5 294.0,418.3 288.6,422.0 283.3,425.6 278.0,429.0 272.7,432.3 267.3,435.6 262.0,438.7 256.7,441.7 251.6,444.6 246.7,447.3 242.1,449.8 237.8,452.1 233.9,454.3 230.5,456.2 227.6,457.9 225.1,459.3 223.0,460.5 221.3,461.5 219.8,462.3 218.5,463.0 217.5,463.6 216.6,464.1 215.8,464.6 215.0,465.0" fill="none" stroke="#d2d2d2" stroke-width="10.2" stroke-dasharray="2.8 2.6" stroke-dashoffset="-2.5"/><polyline points="699.0,83.0 698.9,83.2 699.0,83.0 699.3,82.5 699.5,82.2 699.6,82.0 699.5,82.3 698.8,83.2 697.6,85.0 695.6,87.9 692.8,92.0 689.0,97.7 684.1,104.9 678.6,113.4 672.4,122.7 665.8,132.6 658.9,142.8 652.0,153.0 645.3,162.8 638.8,171.9 632.8,180.0 627.1,187.4 621.4,194.4 615.8,201.1 610.2,207.5 604.7,213.7 599.3,219.7 594.0,225.6 588.8,231.4 583.8,237.1 579.0,242.7 574.4,248.3 569.9,253.7 565.6,259.0 561.5,264.2 557.4,269.3 553.5,274.2 549.6,279.0 545.7,283.7 541.9,288.3 538.0,292.8 534.2,297.1 530.7,301.1 527.2,305.0 523.8,308.7 520.4,312.4 517.0,316.0 513.4,319.6 509.7,323.3 505.7,327.2 501.5,331.2 496.9,335.4 492.1,339.7 487.0,344.1 481.7,348.6 476.4,353.1 471.0,357.6 465.6,362.1 460.2,366.7 455.0,371.1 450.0,375.5 445.2,379.8 440.7,384.1 436.4,388.3 432.1,392.5 427.9,396.7 423.5,400.9 419.0,405.1 414.1,409.4 409.0,413.7 403.4,418.1 397.3,422.6 390.6,427.3 383.6,432.1 376.3,437.0 368.9,441.8 361.4,446.7 354.0,451.4 346.7,456.0 339.8,460.3 333.3,464.5 327.1,468.4 321.2,472.2 315.4,475.9 309.7,479.4 304.2,482.8 298.8,486.1 293.6,489.3 288.3,492.4 283.1,495.5 278.0,498.5 272.8,501.5 267.5,504.4 262.2,507.3 256.9,510.2 251.8,512.9 246.8,515.5 242.2,517.9 237.8,520.2 233.9,522.2 230.5,524.0 227.6,525.5 225.1,526.8 223.0,527.9 221.3,528.8 219.8,529.6 218.5,530.2 217.5,530.7 216.6,531.2 215.8,531.6 215.0,532.0" fill="none" stroke="#000" stroke-width="21" stroke-dasharray="2.4 3.0" stroke-dashoffset="0"/><polyline points="699.0,83.0 698.9,83.2 699.0,83.0 699.3,82.5 699.5,82.2 699.6,82.0 699.5,82.3 698.8,83.2 697.6,85.0 695.6,87.9 692.8,92.0 689.0,97.7 684.1,104.9 678.6,113.4 672.4,122.7 665.8,132.6 658.9,142.8 652.0,153.0 645.3,162.8 638.8,171.9 632.8,180.0 627.1,187.4 621.4,194.4 615.8,201.1 610.2,207.5 604.7,213.7 599.3,219.7 594.0,225.6 588.8,231.4 583.8,237.1 579.0,242.7 574.4,248.3 569.9,253.7 565.6,259.0 561.5,264.2 557.4,269.3 553.5,274.2 549.6,279.0 545.7,283.7 541.9,288.3 538.0,292.8 534.2,297.1 530.7,301.1 527.2,305.0 523.8,308.7 520.4,312.4 517.0,316.0 513.4,319.6 509.7,323.3 505.7,327.2 501.5,331.2 496.9,335.4 492.1,339.7 487.0,344.1 481.7,348.6 476.4,353.1 471.0,357.6 465.6,362.1 460.2,366.7 455.0,371.1 450.0,375.5 445.2,379.8 440.7,384.1 436.4,388.3 432.1,392.5 427.9,396.7 423.5,400.9 419.0,405.1 414.1,409.4 409.0,413.7 403.4,418.1 397.3,422.6 390.6,427.3 383.6,432.1 376.3,437.0 368.9,441.8 361.4,446.7 354.0,451.4 346.7,456.0 339.8,460.3 333.3,464.5 327.1,468.4 321.2,472.2 315.4,475.9 309.7,479.4 304.2,482.8 298.8,486.1 293.6,489.3 288.3,492.4 283.1,495.5 278.0,498.5 272.8,501.5 267.5,504.4 262.2,507.3 256.9,510.2 251.8,512.9 246.8,515.5 242.2,517.9 237.8,520.2 233.9,522.2 230.5,524.0 227.6,525.5 225.1,526.8 223.0,527.9 221.3,528.8 219.8,529.6 218.5,530.2 217.5,530.7 216.6,531.2 215.8,531.6 215.0,532.0" fill="none" stroke="#000" stroke-width="13"/><polyline points="699.0,83.0 698.9,83.2 699.0,83.0 699.3,82.5 699.5,82.2 699.6,82.0 699.5,82.3 698.8,83.2 697.6,85.0 695.6,87.9 692.8,92.0 689.0,97.7 684.1,104.9 678.6,113.4 672.4,122.7 665.8,132.6 658.9,142.8 652.0,153.0 645.3,162.8 638.8,171.9 632.8,180.0 627.1,187.4 621.4,194.4 615.8,201.1 610.2,207.5 604.7,213.7 599.3,219.7 594.0,225.6 588.8,231.4 583.8,237.1 579.0,242.7 574.4,248.3 569.9,253.7 565.6,259.0 561.5,264.2 557.4,269.3 553.5,274.2 549.6,279.0 545.7,283.7 541.9,288.3 538.0,292.8 534.2,297.1 530.7,301.1 527.2,305.0 523.8,308.7 520.4,312.4 517.0,316.0 513.4,319.6 509.7,323.3 505.7,327.2 501.5,331.2 496.9,335.4 492.1,339.7 487.0,344.1 481.7,348.6 476.4,353.1 471.0,357.6 465.6,362.1 460.2,366.7 455.0,371.1 450.0,375.5 445.2,379.8 440.7,384.1 436.4,388.3 432.1,392.5 427.9,396.7 423.5,400.9 419.0,405.1 414.1,409.4 409.0,413.7 403.4,418.1 397.3,422.6 390.6,427.3 383.6,432.1 376.3,437.0 368.9,441.8 361.4,446.7 354.0,451.4 346.7,456.0 339.8,460.3 333.3,464.5 327.1,468.4 321.2,472.2 315.4,475.9 309.7,479.4 304.2,482.8 298.8,486.1 293.6,489.3 288.3,492.4 283.1,495.5 278.0,498.5 272.8,501.5 267.5,504.4 262.2,507.3 256.9,510.2 251.8,512.9 246.8,515.5 242.2,517.9 237.8,520.2 233.9,522.2 230.5,524.0 227.6,525.5 225.1,526.8 223.0,527.9 221.3,528.8 219.8,529.6 218.5,530.2 217.5,530.7 216.6,531.2 215.8,531.6 215.0,532.0" fill="none" stroke="#d2d2d2" stroke-width="10.2" stroke-dasharray="2.8 2.6" stroke-dashoffset="-2.5"/></g><g shape-rendering="auto"><g transform="translate(317.5 316.2) rotate(175) scale(1.55)" stroke="#2a2a2a" fill="none" stroke-width="1.45" stroke-linecap="round"><circle cx="0" cy="-4.6" r="1.05" fill="#2a2a2a" stroke="none"/><path d="M0 -3 V1 M0 1 L-2 5 M0 1 L2.2 5 M-2.4 -.4 L0 -2.4 L2.6 -.6"/></g><g transform="translate(449.5 305.0) rotate(175) scale(1.55)" stroke="#2a2a2a" fill="none" stroke-width="1.45" stroke-linecap="round"><circle cx="0" cy="-4.6" r="1.05" fill="#2a2a2a" stroke="none"/><path d="M0 -3 V1 M0 1 L-2 5 M0 1 L2.2 5 M-2.4 -.4 L0 -2.4 L2.6 -.6"/></g><g transform="translate(584.6 293.0) rotate(175) scale(1.55)" stroke="#2a2a2a" fill="none" stroke-width="1.45" stroke-linecap="round"><circle cx="0" cy="-4.6" r="1.05" fill="#2a2a2a" stroke="none"/><path d="M0 -3 V1 M0 1 L-2 5 M0 1 L2.2 5 M-2.4 -.4 L0 -2.4 L2.6 -.6"/></g><g transform="translate(718.0 281.4) rotate(175) scale(1.55)" stroke="#2a2a2a" fill="none" stroke-width="1.45" stroke-linecap="round"><circle cx="0" cy="-4.6" r="1.05" fill="#2a2a2a" stroke="none"/><path d="M0 -3 V1 M0 1 L-2 5 M0 1 L2.2 5 M-2.4 -.4 L0 -2.4 L2.6 -.6"/></g><g transform="translate(851.6 270.2) rotate(175) scale(1.55)" stroke="#2a2a2a" fill="none" stroke-width="1.45" stroke-linecap="round"><circle cx="0" cy="-4.6" r="1.05" fill="#2a2a2a" stroke="none"/><path d="M0 -3 V1 M0 1 L-2 5 M0 1 L2.2 5 M-2.4 -.4 L0 -2.4 L2.6 -.6"/></g><g transform="translate(1291.6 246.0) rotate(175) scale(1.55)" stroke="#2a2a2a" fill="none" stroke-width="1.45" stroke-linecap="round"><circle cx="0" cy="-4.6" r="1.05" fill="#2a2a2a" stroke="none"/><path d="M0 -3 V1 M0 1 L-2 5 M0 1 L2.2 5 M-2.4 -.4 L0 -2.4 L2.6 -.6"/></g><g transform="translate(335.8 509.2) rotate(175) scale(1.15)" stroke="#2a2a2a" fill="none" stroke-width="1.45" stroke-linecap="round"><circle cx="0" cy="-4.6" r="1.05" fill="#2a2a2a" stroke="none"/><path d="M0 -3 V1 M0 1 L-2 5 M0 1 L2.2 5 M-2.4 -.4 L0 -2.4 L2.6 -.6"/></g><g transform="translate(469.1 500.4) rotate(175) scale(1.15)" stroke="#2a2a2a" fill="none" stroke-width="1.45" stroke-linecap="round"><circle cx="0" cy="-4.6" r="1.05" fill="#2a2a2a" stroke="none"/><path d="M0 -3 V1 M0 1 L-2 5 M0 1 L2.2 5 M-2.4 -.4 L0 -2.4 L2.6 -.6"/></g><g transform="translate(602.6 490.7) rotate(175) scale(1.15)" stroke="#2a2a2a" fill="none" stroke-width="1.45" stroke-linecap="round"><circle cx="0" cy="-4.6" r="1.05" fill="#2a2a2a" stroke="none"/><path d="M0 -3 V1 M0 1 L-2 5 M0 1 L2.2 5 M-2.4 -.4 L0 -2.4 L2.6 -.6"/></g><g transform="translate(735.4 481.5) rotate(175) scale(1.15)" stroke="#2a2a2a" fill="none" stroke-width="1.45" stroke-linecap="round"><circle cx="0" cy="-4.6" r="1.05" fill="#2a2a2a" stroke="none"/><path d="M0 -3 V1 M0 1 L-2 5 M0 1 L2.2 5 M-2.4 -.4 L0 -2.4 L2.6 -.6"/></g><g transform="translate(869.5 471.4) rotate(175) scale(1.15)" stroke="#2a2a2a" fill="none" stroke-width="1.45" stroke-linecap="round"><circle cx="0" cy="-4.6" r="1.05" fill="#2a2a2a" stroke="none"/><path d="M0 -3 V1 M0 1 L-2 5 M0 1 L2.2 5 M-2.4 -.4 L0 -2.4 L2.6 -.6"/></g><g transform="translate(274.4 704.0) rotate(-5) scale(1.55)" stroke="#2a2a2a" fill="none" stroke-width="1.45" stroke-linecap="round"><circle cx="0" cy="-4.6" r="1.05" fill="#2a2a2a" stroke="none"/><path d="M0 -3 V1 M0 1 L-2 5 M0 1 L2.2 5 M-2.4 -.4 L0 -2.4 L2.6 -.6"/></g><g transform="translate(408.5 692.2) rotate(-5) scale(1.55)" stroke="#2a2a2a" fill="none" stroke-width="1.45" stroke-linecap="round"><circle cx="0" cy="-4.6" r="1.05" fill="#2a2a2a" stroke="none"/><path d="M0 -3 V1 M0 1 L-2 5 M0 1 L2.2 5 M-2.4 -.4 L0 -2.4 L2.6 -.6"/></g><g transform="translate(541.3 680.7) rotate(-5) scale(1.55)" stroke="#2a2a2a" fill="none" stroke-width="1.45" stroke-linecap="round"><circle cx="0" cy="-4.6" r="1.05" fill="#2a2a2a" stroke="none"/><path d="M0 -3 V1 M0 1 L-2 5 M0 1 L2.2 5 M-2.4 -.4 L0 -2.4 L2.6 -.6"/></g><g transform="translate(1188.3 616.4) rotate(-5) scale(1.55)" stroke="#2a2a2a" fill="none" stroke-width="1.45" stroke-linecap="round"><circle cx="0" cy="-4.6" r="1.05" fill="#2a2a2a" stroke="none"/><path d="M0 -3 V1 M0 1 L-2 5 M0 1 L2.2 5 M-2.4 -.4 L0 -2.4 L2.6 -.6"/></g><g transform="translate(1322.0 604.5) rotate(-5) scale(1.55)" stroke="#2a2a2a" fill="none" stroke-width="1.45" stroke-linecap="round"><circle cx="0" cy="-4.6" r="1.05" fill="#2a2a2a" stroke="none"/><path d="M0 -3 V1 M0 1 L-2 5 M0 1 L2.2 5 M-2.4 -.4 L0 -2.4 L2.6 -.6"/></g><g transform="translate(678.0 665.2) rotate(-5) scale(1.55)" stroke="#1a1a1a" fill="none" stroke-width="1.45" stroke-linecap="round"><circle cx="0" cy="-4.6" r="1.05" fill="#1a1a1a" stroke="none"/><path d="M0 -3 V1 M0 1 L-2 5 M0 1 L2.2 5 M-2.4 -.4 L0 -2.4 L2.6 -.6"/></g><g transform="translate(812.0 655.2) rotate(-5) scale(1.55)" stroke="#1a1a1a" fill="none" stroke-width="1.45" stroke-linecap="round"><circle cx="0" cy="-4.6" r="1.05" fill="#1a1a1a" stroke="none"/><path d="M0 -3 V1 M0 1 L-2 5 M0 1 L2.2 5 M-2.4 -.4 L0 -2.4 L2.6 -.6"/></g><g transform="translate(939.4 187.5) rotate(95) scale(1.55)" stroke="#2a2a2a" fill="none" stroke-width="1.45" stroke-linecap="round"><circle cx="0" cy="-4.6" r="1.05" fill="#2a2a2a" stroke="none"/><path d="M0 -3 V1 M0 1 L-2 5 M0 1 L2.2 5 M-2.4 -.4 L0 -2.4 L2.6 -.6"/></g><g transform="translate(929.0 393.8) rotate(95) scale(1.55)" stroke="#2a2a2a" fill="none" stroke-width="1.45" stroke-linecap="round"><circle cx="0" cy="-4.6" r="1.05" fill="#2a2a2a" stroke="none"/><path d="M0 -3 V1 M0 1 L-2 5 M0 1 L2.2 5 M-2.4 -.4 L0 -2.4 L2.6 -.6"/></g><g transform="translate(944.0 526.7) rotate(95) scale(1.55)" stroke="#2a2a2a" fill="none" stroke-width="1.45" stroke-linecap="round"><circle cx="0" cy="-4.6" r="1.05" fill="#2a2a2a" stroke="none"/><path d="M0 -3 V1 M0 1 L-2 5 M0 1 L2.2 5 M-2.4 -.4 L0 -2.4 L2.6 -.6"/></g><g transform="translate(960.3 686.6) rotate(95) scale(1.55)" stroke="#2a2a2a" fill="none" stroke-width="1.45" stroke-linecap="round"><circle cx="0" cy="-4.6" r="1.05" fill="#2a2a2a" stroke="none"/><path d="M0 -3 V1 M0 1 L-2 5 M0 1 L2.2 5 M-2.4 -.4 L0 -2.4 L2.6 -.6"/></g><g transform="translate(970.9 779.4) rotate(95) scale(1.55)" stroke="#2a2a2a" fill="none" stroke-width="1.45" stroke-linecap="round"><circle cx="0" cy="-4.6" r="1.05" fill="#2a2a2a" stroke="none"/><path d="M0 -3 V1 M0 1 L-2 5 M0 1 L2.2 5 M-2.4 -.4 L0 -2.4 L2.6 -.6"/></g><g transform="translate(902.6 397.0) rotate(95) scale(1.15)" stroke="#2a2a2a" fill="none" stroke-width="1.45" stroke-linecap="round"><circle cx="0" cy="-4.6" r="1.05" fill="#2a2a2a" stroke="none"/><path d="M0 -3 V1 M0 1 L-2 5 M0 1 L2.2 5 M-2.4 -.4 L0 -2.4 L2.6 -.6"/></g><g transform="translate(912.7 509.0) rotate(95) scale(1.15)" stroke="#2a2a2a" fill="none" stroke-width="1.45" stroke-linecap="round"><circle cx="0" cy="-4.6" r="1.05" fill="#2a2a2a" stroke="none"/><path d="M0 -3 V1 M0 1 L-2 5 M0 1 L2.2 5 M-2.4 -.4 L0 -2.4 L2.6 -.6"/></g><g transform="translate(1034.6 206.0) rotate(-85) scale(1.55)" stroke="#2a2a2a" fill="none" stroke-width="1.45" stroke-linecap="round"><circle cx="0" cy="-4.6" r="1.05" fill="#2a2a2a" stroke="none"/><path d="M0 -3 V1 M0 1 L-2 5 M0 1 L2.2 5 M-2.4 -.4 L0 -2.4 L2.6 -.6"/></g><g transform="translate(1121.9 687.9) rotate(-85) scale(1.55)" stroke="#2a2a2a" fill="none" stroke-width="1.45" stroke-linecap="round"><circle cx="0" cy="-4.6" r="1.05" fill="#2a2a2a" stroke="none"/><path d="M0 -3 V1 M0 1 L-2 5 M0 1 L2.2 5 M-2.4 -.4 L0 -2.4 L2.6 -.6"/></g><g transform="translate(1127.0 376.3) rotate(-85) scale(1.15)" stroke="#2a2a2a" fill="none" stroke-width="1.45" stroke-linecap="round"><circle cx="0" cy="-4.6" r="1.05" fill="#2a2a2a" stroke="none"/><path d="M0 -3 V1 M0 1 L-2 5 M0 1 L2.2 5 M-2.4 -.4 L0 -2.4 L2.6 -.6"/></g><g transform="translate(1138.2 509.0) rotate(-85) scale(1.15)" stroke="#2a2a2a" fill="none" stroke-width="1.45" stroke-linecap="round"><circle cx="0" cy="-4.6" r="1.05" fill="#2a2a2a" stroke="none"/><path d="M0 -3 V1 M0 1 L-2 5 M0 1 L2.2 5 M-2.4 -.4 L0 -2.4 L2.6 -.6"/></g><g transform="translate(1091.9 418.9) rotate(-85) scale(1.25)" stroke="#000" fill="none" stroke-width="1.45" stroke-linecap="round"><circle cx="0" cy="-4.6" r="1.05" fill="#000" stroke="none"/><path d="M0 -3 V1 M0 1 L-2 5 M0 1 L2.2 5 M-2.4 -.4 L0 -2.4 L2.6 -.6"/></g><g transform="translate(1105.6 551.7) rotate(-85) scale(1.25)" stroke="#000" fill="none" stroke-width="1.45" stroke-linecap="round"><circle cx="0" cy="-4.6" r="1.05" fill="#000" stroke="none"/><path d="M0 -3 V1 M0 1 L-2 5 M0 1 L2.2 5 M-2.4 -.4 L0 -2.4 L2.6 -.6"/></g></g><polyline points="644.7,838.0 635.3,700.3 661.7,668.9 850.0,650.3 903.9,645.3 1109.4,567.6 1086.3,360.0" fill="none" stroke="#ff8000" stroke-width="4.4" stroke-linejoin="round" shape-rendering="auto"/><g shape-rendering="auto"><g transform="translate(978.0 203.0) rotate(-6)" fill="#fff" stroke="#fff"><path d="M0 6.0 V-4.0" stroke-width="1.1"/><path d="M-2.2 -2.0 L0 -7.5 L2.2 -2.0 Z" stroke="none"/></g><g transform="translate(972.5 219.0) rotate(174)" fill="#fff" stroke="#fff"><path d="M0 4.5 V-2.5" stroke-width="1.1"/><path d="M-2.2 -0.5 L0 -6.0 L2.2 -0.5 Z" stroke="none"/></g><g transform="translate(966.0 211.0) rotate(-96)" fill="#fff" stroke="#fff"><path d="M0 6.0 V-4.0" stroke-width="1.1"/><path d="M-2.2 -2.0 L0 -7.5 L2.2 -2.0 Z" stroke="none"/></g><g transform="translate(1054.7 674.0) rotate(-6)" fill="#fff" stroke="#fff"><path d="M0 6.0 V-4.0" stroke-width="1.1"/><path d="M-2.2 -2.0 L0 -7.5 L2.2 -2.0 Z" stroke="none"/></g><g transform="translate(1083.0 671.5) rotate(-6)" fill="#fff" stroke="#fff"><path d="M0 6.0 V-4.0" stroke-width="1.1"/><path d="M-2.2 -2.0 L0 -7.5 L2.2 -2.0 Z" stroke="none"/></g><g transform="translate(1102.0 670.0) rotate(-6)" fill="#fff" stroke="#fff"><path d="M0 5.0 V-3.0" stroke-width="1.1"/><path d="M-2.2 -1.0 L0 -6.5 L2.2 -1.0 Z" stroke="none"/></g><g transform="translate(1000.4 700.0) rotate(174)" fill="#fff" stroke="#fff"><path d="M0 7.0 V-5.0" stroke-width="1.1"/><path d="M-2.2 -3.0 L0 -8.5 L2.2 -3.0 Z" stroke="none"/></g><g transform="translate(1028.7 697.0) rotate(174)" fill="#fff" stroke="#fff"><path d="M0 7.0 V-5.0" stroke-width="1.1"/><path d="M-2.2 -3.0 L0 -8.5 L2.2 -3.0 Z" stroke="none"/></g><g transform="translate(1004.0 739.0) rotate(174)" fill="#fff" stroke="#fff"><path d="M0 7.0 V-5.0" stroke-width="1.1"/><path d="M-2.2 -3.0 L0 -8.5 L2.2 -3.0 Z" stroke="none"/></g><g transform="translate(1033.5 734.0) rotate(174)" fill="#fff" stroke="#fff"><path d="M0 7.0 V-5.0" stroke-width="1.1"/><path d="M-2.2 -3.0 L0 -8.5 L2.2 -3.0 Z" stroke="none"/></g><g transform="translate(1065.8 771.0) rotate(-6)" fill="#fff" stroke="#fff"><path d="M0 7.0 V-5.0" stroke-width="1.1"/><path d="M-2.2 -3.0 L0 -8.5 L2.2 -3.0 Z" stroke="none"/></g><g transform="translate(1094.0 769.0) rotate(-6)" fill="#fff" stroke="#fff"><path d="M0 7.0 V-5.0" stroke-width="1.1"/><path d="M-2.2 -3.0 L0 -8.5 L2.2 -3.0 Z" stroke="none"/></g><g transform="translate(1111.6 766.0) rotate(-6)" fill="#fff" stroke="#fff"><path d="M0 6.0 V-4.0" stroke-width="1.1"/><path d="M-2.2 -2.0 L0 -7.5 L2.2 -2.0 Z" stroke="none"/></g><g transform="translate(1050.5 385.0) rotate(-6)" fill="#fff" stroke="#fff"><path d="M0 10.0 V-8.0" stroke-width="1.1"/><path d="M-2.2 -6.0 L0 -11.5 L2.2 -6.0 Z" stroke="none"/></g><g transform="translate(1069.8 384.0) rotate(-6)" fill="#fff" stroke="#fff"><path d="M0 10.0 V-8.0" stroke-width="1.1"/><path d="M-2.2 -6.0 L0 -11.5 L2.2 -6.0 Z" stroke="none"/></g><g transform="translate(1019.0 548.0) rotate(-6)" fill="#fff" stroke="#fff"><path d="M0 6.0 V-4.0" stroke-width="1.1"/><path d="M-2.2 -2.0 L0 -7.5 L2.2 -2.0 Z" stroke="none"/></g><g transform="translate(1024.5 556.0) rotate(84)" fill="#fff" stroke="#fff"><path d="M0 6.0 V-4.0" stroke-width="1.1"/><path d="M-2.2 -2.0 L0 -7.5 L2.2 -2.0 Z" stroke="none"/></g><g transform="translate(1017.0 565.0) rotate(174)" fill="#fff" stroke="#fff"><path d="M0 4.0 V-2.0" stroke-width="1.1"/><path d="M-2.2 0.0 L0 -5.5 L2.2 0.0 Z" stroke="none"/></g><g transform="translate(984.5 562.0) rotate(174)" fill="#fff" stroke="#fff"><path d="M0 7.0 V-5.0" stroke-width="1.1"/><path d="M-2.2 -3.0 L0 -8.5 L2.2 -3.0 Z" stroke="none"/></g><g transform="translate(1016.0 392.0) rotate(174)" fill="#fff" stroke="#fff"><path d="M0 4.5 V-2.5" stroke-width="1.1"/><path d="M-2.2 -0.5 L0 -6.0 L2.2 -0.5 Z" stroke="none"/></g><g transform="translate(1011.0 389.5) rotate(-96)" fill="#fff" stroke="#fff"><path d="M0 5.0 V-3.0" stroke-width="1.1"/><path d="M-2.2 -1.0 L0 -6.5 L2.2 -1.0 Z" stroke="none"/></g><g transform="translate(556.0 653.0) rotate(84)" fill="#fff" stroke="#fff"><path d="M0 7.0 V-5.0" stroke-width="1.1"/><path d="M-2.2 -3.0 L0 -8.5 L2.2 -3.0 Z" stroke="none"/></g><g transform="translate(553.5 661.0) rotate(174)" fill="#fff" stroke="#fff"><path d="M0 4.5 V-2.5" stroke-width="1.1"/><path d="M-2.2 -0.5 L0 -6.0 L2.2 -0.5 Z" stroke="none"/></g><g transform="translate(640.0 729.0) rotate(84)" fill="#fff" stroke="#fff"><path d="M0 4.5 V-2.5" stroke-width="1.1"/><path d="M-2.2 -0.5 L0 -6.0 L2.2 -0.5 Z" stroke="none"/></g><g transform="translate(632.5 739.0) rotate(174)" fill="#fff" stroke="#fff"><path d="M0 5.0 V-3.0" stroke-width="1.1"/><path d="M-2.2 -1.0 L0 -6.5 L2.2 -1.0 Z" stroke="none"/></g><g transform="translate(879.5 614.0) rotate(-5)" fill="#fff" stroke="#fff"><path d="M0 6.0 V-4.0" stroke-width="1.1"/><path d="M-2.2 -2.0 L0 -7.5 L2.2 -2.0 Z" stroke="none"/></g><g transform="translate(878.5 626.0) rotate(175)" fill="#fff" stroke="#fff"><path d="M0 5.0 V-3.0" stroke-width="1.1"/><path d="M-2.2 -1.0 L0 -6.5 L2.2 -1.0 Z" stroke="none"/></g><g transform="translate(885.0 619.5) rotate(85)" fill="#fff" stroke="#fff"><path d="M0 5.5 V-3.5" stroke-width="1.1"/><path d="M-2.2 -1.5 L0 -7.0 L2.2 -1.5 Z" stroke="none"/></g><g transform="translate(872.5 620.5) rotate(-95)" fill="#fff" stroke="#fff"><path d="M0 5.5 V-3.5" stroke-width="1.1"/><path d="M-2.2 -1.5 L0 -7.0 L2.2 -1.5 Z" stroke="none"/></g><g transform="translate(1109.0 690.0) rotate(-6)" fill="#fff" stroke="#fff"><path d="M0 5.0 V-3.0" stroke-width="1.1"/><path d="M-2.2 -1.0 L0 -6.5 L2.2 -1.0 Z" stroke="none"/></g><polyline points="1147.5,290.3 1174.0,288.0" fill="none" stroke="#fff" stroke-width="2.6"/><polyline points="1150.0,318.8 1177.0,316.4" fill="none" stroke="#fff" stroke-width="2.6"/><g transform="translate(1160.5 281.5) rotate(-5)" fill="#fff" stroke="#fff"><path d="M0 4.5 V-2.5" stroke-width="1.1"/><path d="M-2.2 -0.5 L0 -6.0 L2.2 -0.5 Z" stroke="none"/></g><g transform="translate(1168.0 325.0) rotate(175)" fill="#fff" stroke="#fff"><path d="M0 4.5 V-2.5" stroke-width="1.1"/><path d="M-2.2 -0.5 L0 -6.0 L2.2 -0.5 Z" stroke="none"/></g><polyline points="1174.0,288.0 1192.0,286.4" fill="none" stroke="#fff" stroke-width="1"/><polyline points="1177.0,316.4 1194.0,314.8" fill="none" stroke="#fff" stroke-width="1"/></g></svg>
</div>
</body></html>
